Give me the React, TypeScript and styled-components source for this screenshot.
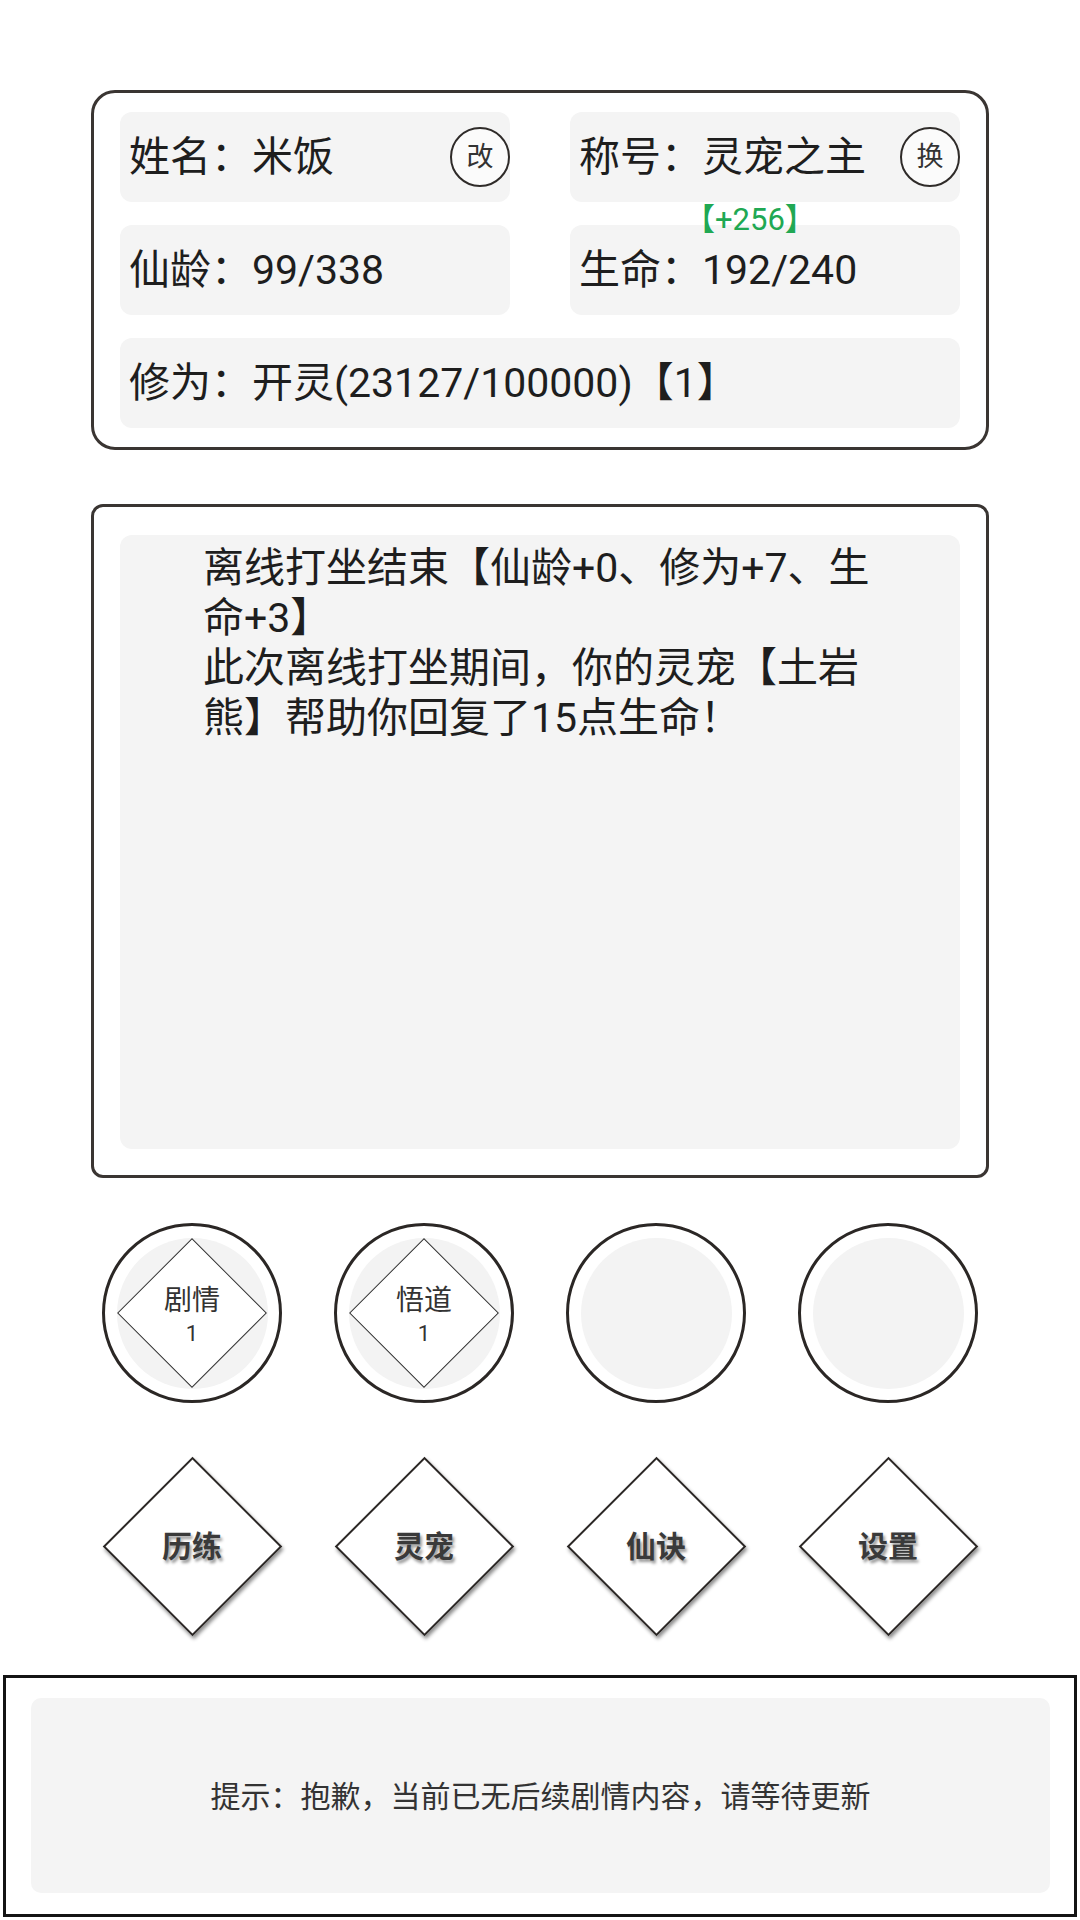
import styled, { createGlobalStyle } from "styled-components";

const GlobalStyle = createGlobalStyle`
  html, body {
    margin: 0;
    padding: 0;
    background: #ffffff;
  }
  body {
    font-family: Roboto, "Noto Sans CJK SC", sans-serif;
    color: #222;
  }
`;

const Page = styled.div`
  width: 1080px;
  height: 1920px;
  padding-top: 90px;
  box-sizing: border-box;
  display: flex;
  flex-direction: column;
  overflow: hidden;
`;

const InfoCard = styled.div`
  margin-left: 91px;
  width: 898px;
  box-sizing: border-box;
  border: 3px solid #3a3532;
  border-radius: 24px;
  padding: 19px 26px 19px 26px;
  display: grid;
  grid-template-columns: 1fr 1fr;
  column-gap: 60px;
  row-gap: 23px;
`;

const Cell = styled.div<{ $wide?: boolean }>`
  position: relative;
  grid-column: ${({ $wide }) => ($wide ? "1 / span 2" : "auto")};
  height: 90px;
  background: #f4f4f4;
  border-radius: 12px;
  padding-left: 9px;
  display: flex;
  align-items: center;
  justify-content: space-between;
  font-size: 41px;
  line-height: 1;
  color: #1e1e1e;
  white-space: nowrap;
`;

const RoundTag = styled.div`
  width: 60px;
  height: 60px;
  box-sizing: border-box;
  border: 2px solid #2f2b29;
  border-radius: 50%;
  background: #fbfbfb;
  display: flex;
  align-items: center;
  justify-content: center;
  font-size: 27px;
  color: #333;
`;

const Bonus = styled.span`
  position: absolute;
  top: -21px;
  left: 114px;
  font-size: 31px;
  line-height: 1;
  color: #20a853;
`;

const LogCard = styled.div`
  margin-top: 54px;
  margin-left: 91px;
  width: 898px;
  height: 674px;
  box-sizing: border-box;
  border: 3px solid #3a3532;
  border-radius: 12px;
  padding: 28px 26px 26px 26px;
  display: flex;
`;

const LogBody = styled.div`
  flex: 1;
  background: #f4f4f4;
  border-radius: 12px;
  padding: 8px 0 0 83px;
`;

const LogText = styled.p`
  margin: 0;
  width: 688px;
  font-size: 41px;
  line-height: 50px;
  color: #1e1e1e;
`;

const Row = styled.div<{ $top: number }>`
  margin-top: ${({ $top }) => $top}px;
  padding-left: 102px;
  display: flex;
  gap: 52px;
`;

const Ring = styled.div`
  width: 180px;
  height: 180px;
  box-sizing: border-box;
  border: 3px solid #2b2725;
  border-radius: 50%;
  display: flex;
  align-items: center;
  justify-content: center;
`;

const Disc = styled.div`
  position: relative;
  width: 151px;
  height: 151px;
  border-radius: 50%;
  background: #f3f3f3;
  display: flex;
  align-items: center;
  justify-content: center;
`;

const SmallDiamond = styled.div`
  position: absolute;
  width: 106px;
  height: 106px;
  box-sizing: border-box;
  background: #ffffff;
  border: 1.5px solid #333;
  transform: rotate(45deg);
`;

const BadgeText = styled.div`
  position: relative;
  display: flex;
  flex-direction: column;
  align-items: center;
  color: #333;
  font-size: 28px;
  line-height: 34px;
  margin-top: 8px;

  span {
    font-size: 22px;
    line-height: 32px;
  }
`;

const Tile = styled.div`
  position: relative;
  width: 180px;
  height: 180px;
  display: flex;
  align-items: center;
  justify-content: center;
`;

const BigDiamond = styled.div`
  position: absolute;
  width: 127px;
  height: 127px;
  box-sizing: border-box;
  background: #ffffff;
  border: 2px solid #2b2725;
  transform: rotate(45deg);
  box-shadow: 3px 1px 4px rgba(0, 0, 0, 0.45);
`;

const TileLabel = styled.span`
  position: relative;
  margin-top: -4px;
  font-size: 30px;
  font-weight: 700;
  color: #3a3a3a;
  text-shadow: 2px 3px 3px rgba(0, 0, 0, 0.4);
`;

const TipBox = styled.div`
  margin-top: 39px;
  margin-left: 3px;
  width: 1074px;
  height: 242px;
  box-sizing: border-box;
  border: 3px solid #141414;
  padding: 20px 24px 21px 25px;
  display: flex;
`;

const TipBody = styled.div`
  flex: 1;
  background: #f4f4f4;
  border-radius: 10px;
  display: flex;
  align-items: center;
  justify-content: center;
  font-size: 30px;
  color: #333;
  padding-bottom: 4px;
`;

const badges = [
  { label: "剧情", count: 1 },
  { label: "悟道", count: 1 },
  null,
  null,
];

const tiles = ["历练", "灵宠", "仙诀", "设置"];

export default function App() {
  return (
    <>
      <GlobalStyle />
      <Page>
        <InfoCard>
          <Cell>
            <span>姓名：米饭</span>
            <RoundTag>改</RoundTag>
          </Cell>
          <Cell>
            <span>称号：灵宠之主</span>
            <RoundTag>换</RoundTag>
          </Cell>
          <Cell>
            <span>仙龄：99/338</span>
          </Cell>
          <Cell>
            <Bonus>【+256】</Bonus>
            <span>生命：192/240</span>
          </Cell>
          <Cell $wide>
            <span>修为：开灵(23127/100000)【1】</span>
          </Cell>
        </InfoCard>

        <LogCard>
          <LogBody>
            <LogText>离线打坐结束【仙龄+0、修为+7、生命+3】</LogText>
            <LogText>此次离线打坐期间，你的灵宠【土岩熊】帮助你回复了15点生命！</LogText>
          </LogBody>
        </LogCard>

        <Row $top={45}>
          {badges.map((b, i) => (
            <Ring key={i}>
              <Disc>
                {b && (
                  <>
                    <SmallDiamond />
                    <BadgeText>
                      {b.label}
                      <span>{b.count}</span>
                    </BadgeText>
                  </>
                )}
              </Disc>
            </Ring>
          ))}
        </Row>

        <Row $top={53}>
          {tiles.map((t) => (
            <Tile key={t}>
              <BigDiamond />
              <TileLabel>{t}</TileLabel>
            </Tile>
          ))}
        </Row>

        <TipBox>
          <TipBody>提示：抱歉，当前已无后续剧情内容，请等待更新</TipBody>
        </TipBox>
      </Page>
    </>
  );
}
